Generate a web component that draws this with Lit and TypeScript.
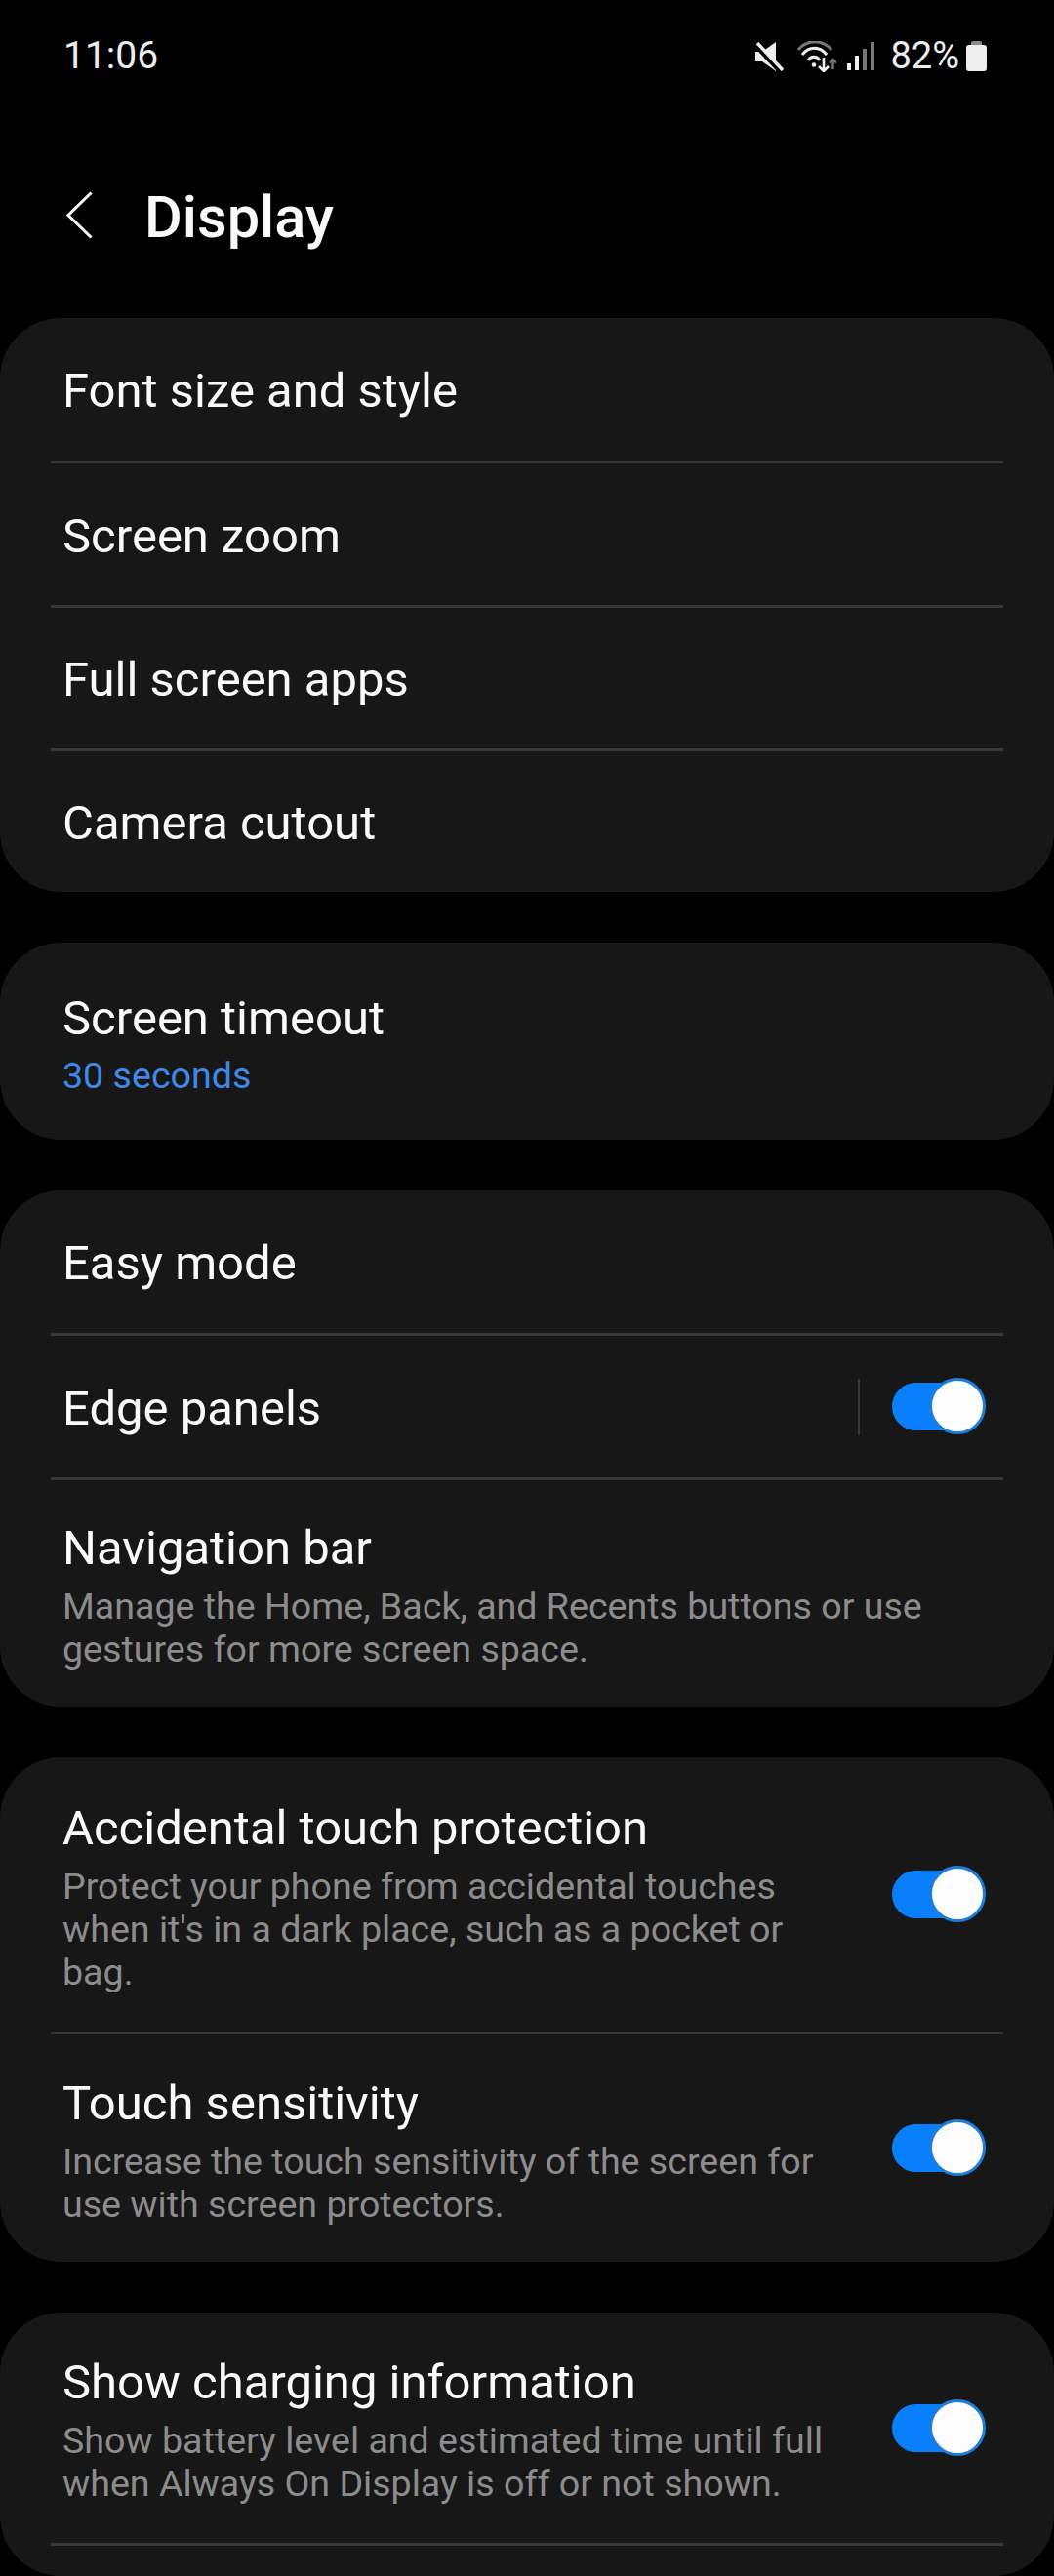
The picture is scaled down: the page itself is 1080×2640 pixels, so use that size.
import { LitElement, html, css, nothing } from "lit";
import { customElement } from "lit/decorators.js";

interface Row { t: string; d?: string; v?: string; h: number; toggle?: boolean; divider?: boolean; }

const cards: Row[][] = [
  [
    { t: "Font size and style", h: 146 },
    { t: "Screen zoom", h: 145 },
    { t: "Full screen apps", h: 144 },
    { t: "Camera cutout", h: 144 },
  ],
  [{ t: "Screen timeout", v: "30 seconds", h: 202 }],
  [
    { t: "Easy mode", h: 146 },
    { t: "Edge panels", h: 145, toggle: true, divider: true },
    { t: "Navigation bar", d: "Manage the Home, Back, and Recents buttons or use gestures for more screen space.", h: 232 },
  ],
  [
    { t: "Accidental touch protection", d: "Protect your phone from accidental touches when it's in a dark place, such as a pocket or bag.", h: 281, toggle: true },
    { t: "Touch sensitivity", d: "Increase the touch sensitivity of the screen for use with screen protectors.", h: 233, toggle: true },
  ],
  [
    { t: "Show charging information", d: "Show battery level and estimated time until full when Always On Display is off or not shown.", h: 236, toggle: true },
    { t: "", h: 31 },
  ],
];

@customElement("app-root")
export class AppRoot extends LitElement {
  static styles = css`
    :host { display: block; width: 1080px; height: 2640px; overflow: hidden; background: #000; color: #fafafa; font-family: Roboto, "Liberation Sans", sans-serif; }
    .status { height: 114px; display: flex; align-items: flex-start; padding: 35px 69px 0 65px; box-sizing: border-box; justify-content: space-between; }
    .time { font-size: 39px; line-height: 45px; color: #eee; }
    .sicons { display: flex; align-items: center; height: 45px; }
    .pct { font-size: 38px; line-height: 45px; color: #eee; margin: 0 7px 0 0; }
    .sicons svg { display: block; flex: none; }
    .mute { margin-right: 13px; }
    .wifi { margin-right: 11px; }
    .signal { margin-right: 16px; }
    .head { height: 212px; box-sizing: border-box; padding: 0 0 0 68px; display: flex; align-items: flex-start; }
    .back { margin-top: 82px; display: block; flex: none; }
    .title { margin: 73px 0 0 53px; font-size: 59.5px; font-weight: 500; line-height: 72px; color: #fafafa; }
    .cards { display: flex; flex-direction: column; gap: 52px; }
    .card { background: #171717; border-radius: 62px; }
    .row { display: flex; align-items: center; padding: 4px 73px 0 64px; box-sizing: border-box; }
    .body { flex: 1; min-width: 0; }
    .t { font-size: 49px; line-height: 58px; color: #fafafa; }
    .v { font-size: 37.6px; line-height: 44px; margin-top: 7px; color: #4088e8; }
    .d { font-size: 37.6px; line-height: 44px; margin-top: 8px; color: #8c8c8c; }
    .sep { height: 3px; background: #383838; margin: 0 52px; }
    .divider { width: 2px; height: 58px; background: #383838; margin: 0 33px 4px 0; }
    .sw { position: relative; width: 93px; height: 49px; background: #0a7ffb; border-radius: 25px; flex: none; margin: 0 0 4px 50px; }
    .divider + .sw { margin-left: 0; }
    .knob { position: absolute; right: -3px; top: -5px; width: 52px; height: 52px; border-radius: 50%; background: #fcfcfc; border: 3px solid #1d7ddb; }
  `;

  private row(r: Row) {
    return html`<div class="row" style="height:${r.h}px">
      <div class="body">
        ${r.t ? html`<div class="t">${r.t}</div>` : nothing}
        ${r.v ? html`<div class="v">${r.v}</div>` : nothing}
        ${r.d ? html`<div class="d">${r.d}</div>` : nothing}
      </div>
      ${r.divider ? html`<div class="divider"></div>` : nothing}
      ${r.toggle ? html`<div class="sw"><div class="knob"></div></div>` : nothing}
    </div>`;
  }

  render() {
    return html`
      <div class="status">
        <div class="time">11:06</div>
        <div class="sicons">
          <svg class="mute" width="30" height="30" viewBox="0 0 30 30">
            <path d="M0 10h7L21 0v30L7 20H0z" fill="#eee"/>
            <path d="M0 2l26 28" stroke="#000" stroke-width="6"/>
            <path d="M2 1l26 28" stroke="#eee" stroke-width="3.4"/>
          </svg>
          <svg class="wifi" width="40" height="32" viewBox="0 0 40 32">
            <path d="M1 9C10 -2 26 -2 35 9" fill="none" stroke="#777" stroke-width="3"/>
            <path d="M5 14C12 5 23 5 30 14" fill="none" stroke="#eee" stroke-width="3"/>
            <path d="M11 20C14 15 20 15 23 20" fill="none" stroke="#eee" stroke-width="3"/>
            <circle cx="17" cy="24.5" r="2.3" fill="#eee"/>
            <path d="M27 17v14M22 26l5 5 5-5" fill="none" stroke="#eee" stroke-width="2.6"/>
            <path d="M36.500 29V19M33 22.500l3.500-3.500 3.500 3.500" fill="none" stroke="#777" stroke-width="2.4"/>
          </svg>
          <svg class="signal" width="28" height="29" viewBox="0 0 28 29">
            <rect x="0" y="22" width="4" height="7" fill="#eee"/>
            <rect x="8" y="14" width="4" height="15" fill="#eee"/>
            <rect x="16" y="7" width="4" height="22" fill="#777"/>
            <rect x="24" y="0" width="4" height="29" fill="#777"/>
          </svg>
          <div class="pct">82%</div>
          <svg width="21" height="31" viewBox="0 0 21 31">
            <path d="M7 0h7a2 2 0 0 1 2 2v2H5V2a2 2 0 0 1 2-2z" fill="#888"/>
            <path d="M3 4h15a3 3 0 0 1 3 3v21a3 3 0 0 1-3 3H3a3 3 0 0 1-3-3V7a3 3 0 0 1 3-3z" fill="#eee"/>
          </svg>
        </div>
      </div>
      <div class="head">
        <svg class="back" width="27" height="49" viewBox="0 0 27 49">
          <path d="M25.500 1.500L2 24.500l23.500 23" fill="none" stroke="#fafafa" stroke-width="3"/>
        </svg>
        <div class="title">Display</div>
      </div>
      <div class="cards">
        ${cards.map(
          (c) => html`<div class="card">
            ${c.map((r, i) => html`${i > 0 ? html`<div class="sep"></div>` : nothing}${this.row(r)}`)}
          </div>`
        )}
      </div>
    `;
  }
}
